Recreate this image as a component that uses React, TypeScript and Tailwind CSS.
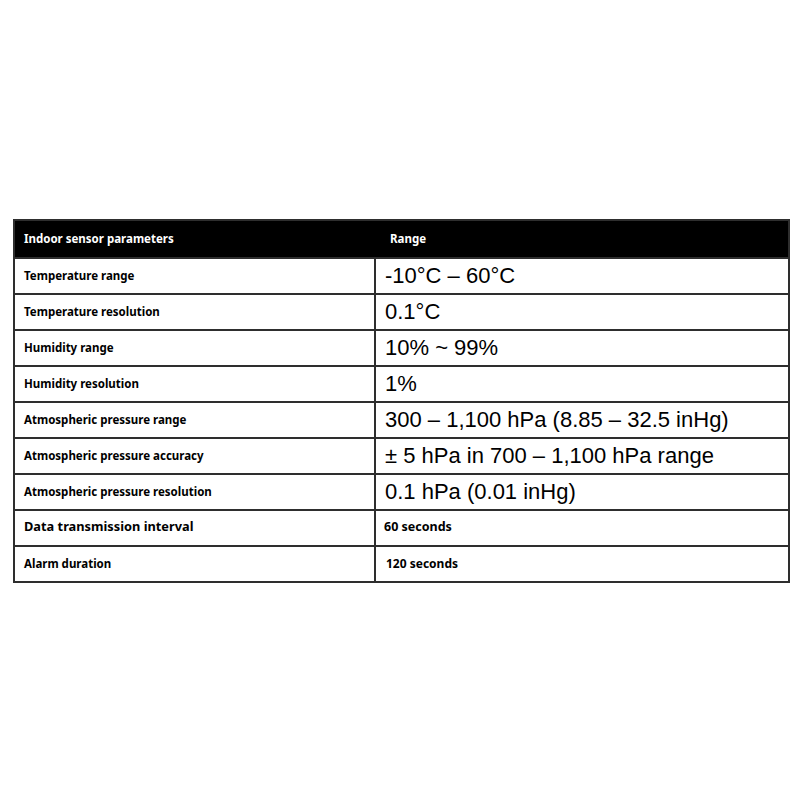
const rows: { label: string; value: string; big?: boolean; small?: boolean }[] = [
  { label: 'Temperature range', value: '-10°C – 60°C' },
  { label: 'Temperature resolution', value: '0.1°C' },
  { label: 'Humidity range', value: '10% ~ 99%' },
  { label: 'Humidity resolution', value: '1%' },
  { label: 'Atmospheric pressure range', value: '300 – 1,100 hPa (8.85 – 32.5 inHg)' },
  { label: 'Atmospheric pressure accuracy', value: '± 5 hPa in 700 – 1,100 hPa range' },
  { label: 'Atmospheric pressure resolution', value: '0.1 hPa (0.01 inHg)' },
  { label: 'Data transmission interval', value: '60 seconds', big: true, small: true },
  { label: 'Alarm duration', value: '120 seconds', small: true },
]

export default function App() {
  return (
    <div className="flex h-[800px] w-[800px] flex-col bg-white pl-[13px] pt-[219px]">
      <table className="w-[777px] table-fixed border-collapse border-2 border-[#2e2e2e] font-['Noto_Sans',sans-serif] text-black">
        <colgroup>
          <col className="w-[361px]" />
          <col />
        </colgroup>
        <thead>
          <tr className="h-[38px] bg-black text-[11.5px] font-bold text-white">
            <th className="pl-[9px] text-left font-bold">Indoor sensor parameters</th>
            <th className="pl-[15px] text-left font-bold">Range</th>
          </tr>
        </thead>
        <tbody>
          {rows.map((r) => (
            <tr key={r.label} className="h-[36px]">
              <td
                className={
                  r.big
                    ? 'border-2 border-[#2e2e2e] pb-[4px] pl-[9px] text-[12.8px] font-bold leading-none'
                    : 'border-2 border-[#2e2e2e] pl-[9px] text-[11.5px] font-bold leading-none'
                }
              >
                {r.label}
              </td>
              <td
                className={
                  r.small
                    ? r.big
                      ? 'border-2 border-[#2e2e2e] pb-[2px] pl-[8px] text-[12.5px] font-bold leading-none'
                      : 'border-2 border-[#2e2e2e] pl-[10px] text-[12px] font-bold leading-none'
                    : "border-2 border-[#2e2e2e] pl-[9px] font-['Liberation_Sans',Arial,sans-serif] text-[22px] leading-none"
                }
              >
                {r.value}
              </td>
            </tr>
          ))}
        </tbody>
      </table>
    </div>
  )
}
